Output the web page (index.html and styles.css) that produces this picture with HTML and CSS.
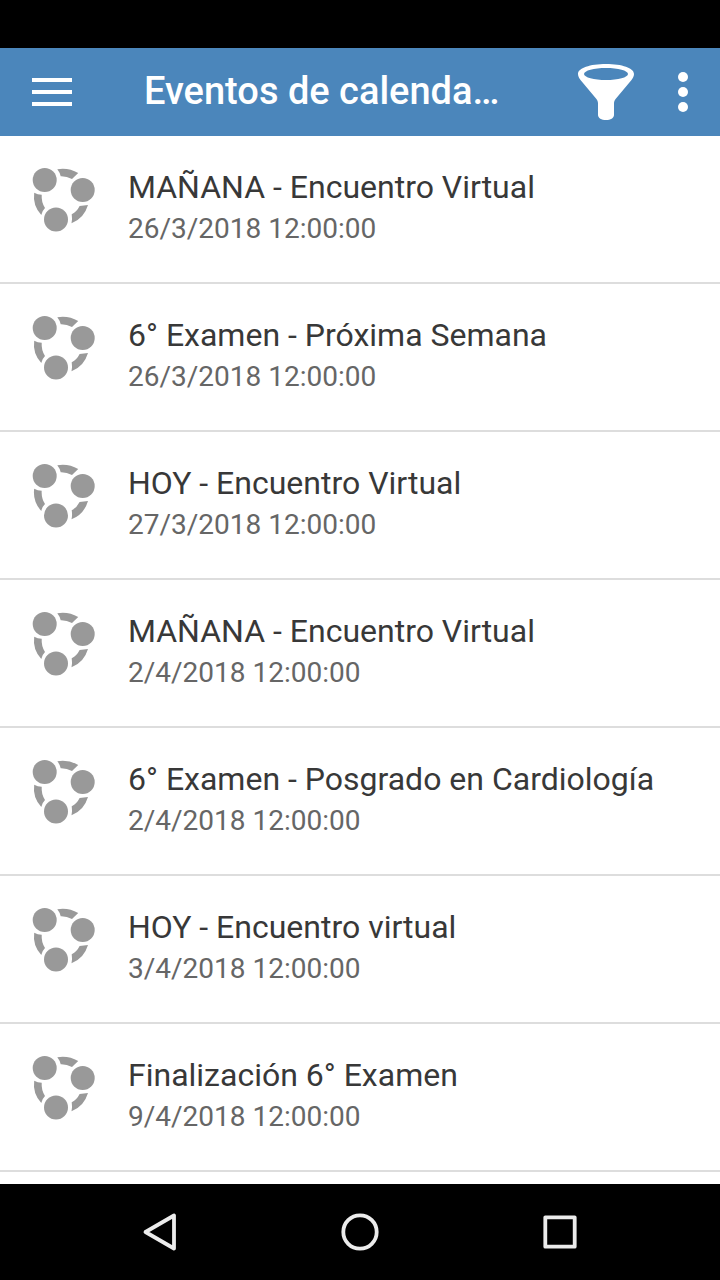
FILE: index.html
```html
<!DOCTYPE html>
<html lang="es">
  <head>
    <meta charset="UTF-8" />
    <title>Eventos de calendario</title>
    <link rel="stylesheet" href="styles.css">
  </head>
  <body>
    <!-- Shared icon -->
    <svg class="defs">
      <symbol id="community" viewBox="0 0 64 66">
        <path d="M25.300 3.200Q36.500 1.300 46.200 7L40 13Q34.500 10 28.700 10.200Q27.800 6.300 25.300 3.200z" />
        <path d="M2.200 26.700Q5.600 28.600 9.700 28.700Q9.200 36 13 42Q10 45 9.300 49Q0.500 39.500 2.200 26.700z" />
        <path d="M56 39L47.600 40Q45 45.500 39.700 48.300Q40.500 53 39.500 57.300Q52 52.500 56 39z" />
        <circle cx="12.700" cy="13.900" r="12" />
        <circle cx="50.700" cy="24" r="12" />
        <circle cx="24" cy="53.500" r="12" />
      </symbol>
    </svg>

    <div class="screen">
      <div class="status-bar"></div>

      <header class="toolbar">
        <svg class="menu" viewBox="0 0 40 28">
          <path d="M0 0h40v4H0zM0 12h40v4H0zM0 24h40v4H0z" />
        </svg>
        <h1>Eventos de calenda…</h1>
        <svg class="filter" viewBox="0 0 56 56">
          <path fill-rule="evenodd" d="M28 0C12 0 0 4 0 10c0 2 1 4 2.500 6L18 34.500c1.500 2 2 3 2 5V51c0 3 3.500 5 8 5s8-2 8-5V39.500c0-2 .5-3 2-5L53.500 16c1.500-2 2.500-4 2.500-6 0-6-12-10-28-10zM28 4c12 0 22 2.600 22 6s-10 6-22 6S6 13.400 6 10 16 4 28 4z" />
        </svg>
        <svg class="more" viewBox="0 0 10 40">
          <circle cx="5" cy="5" r="5" />
          <circle cx="5" cy="20" r="5" />
          <circle cx="5" cy="35" r="5" />
        </svg>
      </header>

      <main class="events">
        <div class="event">
          <svg class="icon"><use href="#community" /></svg>
          <div>
            <h2>MAÑANA - Encuentro Virtual</h2>
            <p>26/3/2018 12:00:00</p>
          </div>
        </div>
        <div class="event">
          <svg class="icon"><use href="#community" /></svg>
          <div>
            <h2>6° Examen - Próxima Semana</h2>
            <p>26/3/2018 12:00:00</p>
          </div>
        </div>
        <div class="event">
          <svg class="icon"><use href="#community" /></svg>
          <div>
            <h2>HOY - Encuentro Virtual</h2>
            <p>27/3/2018 12:00:00</p>
          </div>
        </div>
        <div class="event">
          <svg class="icon"><use href="#community" /></svg>
          <div>
            <h2>MAÑANA - Encuentro Virtual</h2>
            <p>2/4/2018 12:00:00</p>
          </div>
        </div>
        <div class="event">
          <svg class="icon"><use href="#community" /></svg>
          <div>
            <h2>6° Examen - Posgrado en Cardiología</h2>
            <p>2/4/2018 12:00:00</p>
          </div>
        </div>
        <div class="event">
          <svg class="icon"><use href="#community" /></svg>
          <div>
            <h2>HOY - Encuentro virtual</h2>
            <p>3/4/2018 12:00:00</p>
          </div>
        </div>
        <div class="event">
          <svg class="icon"><use href="#community" /></svg>
          <div>
            <h2>Finalización 6° Examen</h2>
            <p>9/4/2018 12:00:00</p>
          </div>
        </div>
      </main>

      <!-- Android buttons -->
      <nav class="nav-bar">
        <svg viewBox="0 0 40 40"><path d="M5.500 20L34 3.500v33z" /></svg>
        <svg viewBox="0 0 40 40"><circle cx="20" cy="20" r="16.700" /></svg>
        <svg viewBox="0 0 40 40"><rect x="5.300" y="5.300" width="29.400" height="29.400" /></svg>
      </nav>
    </div>
  </body>
</html>
```

FILE: styles.css
```css
* {
  box-sizing: border-box;
}

body {
  margin: 0;
  font-family: Roboto, sans-serif;
  background: #fff;
}

h1,
h2,
p {
  margin: 0;
}

.defs {
  display: none;
}

.screen {
  display: flex;
  flex-direction: column;
  height: 1280px;
  overflow: hidden;
}

.status-bar {
  height: 48px;
  background: #000;
}

.toolbar {
  display: flex;
  align-items: center;
  height: 88px;
  padding: 0 32px;
  background: #4b86bb;
  color: #fff;
  fill: #fff;
}

.toolbar h1 {
  width: 362px;
  margin-left: 72px;
  padding-bottom: 2px;
  font-size: 38px;
  font-weight: 500;
  line-height: 48px;
  white-space: nowrap;
}

.menu {
  width: 40px;
  height: 28px;
}

.filter {
  width: 56px;
  height: 56px;
  margin-left: 72px;
}

.more {
  width: 10px;
  height: 40px;
  margin-left: 44px;
}

.events {
  flex: 1;
}

.event {
  display: flex;
  height: 148px;
  padding: 30px 32px 0;
  border-bottom: 2px solid #ddd;
}

.icon {
  width: 64px;
  height: 66px;
  margin-right: 32px;
  fill: #999;
}

.event h2 {
  font-size: 32px;
  font-weight: 400;
  line-height: 42px;
  color: #383838;
}

.event p {
  font-size: 28px;
  line-height: 42px;
  color: #666;
}

.nav-bar {
  display: flex;
  justify-content: center;
  align-items: center;
  gap: 160px;
  height: 96px;
  background: #000;
}

.nav-bar svg {
  width: 40px;
  height: 40px;
  fill: none;
  stroke: #ececec;
  stroke-width: 3.800;
  stroke-linejoin: round;
}
```
